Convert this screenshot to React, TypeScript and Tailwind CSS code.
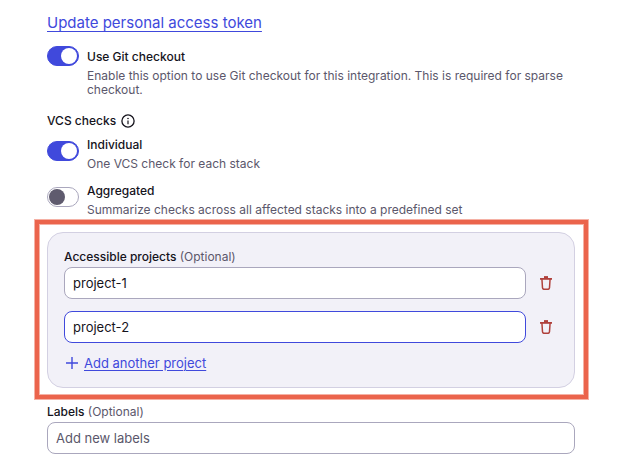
import { useState } from "react";

const initialProjects = ["project-1", "project-2"];

function Toggle({
  id,
  label,
  description,
  defaultChecked,
  align = "top",
}: {
  id: string;
  label: string;
  description: string;
  defaultChecked?: boolean;
  align?: "top" | "offset";
}) {
  return (
    <div className="flex items-start gap-2">
      <span
        className={`relative block h-5 w-8 shrink-0 ${align === "top" ? "" : "mt-1"}`}
      >
        <input
          id={id}
          type="checkbox"
          role="switch"
          defaultChecked={defaultChecked}
          className="peer block h-5 w-8 cursor-pointer appearance-none rounded-full border border-[#aaa7bd] bg-white checked:border-[#4049dc] checked:bg-[#4049dc]"
        />
        <span className="pointer-events-none absolute top-0.5 left-0.5 size-4 rounded-full bg-[#5f5b6e] peer-checked:left-3.5 peer-checked:bg-white" />
      </span>
      <div className={`min-w-0 ${align === "top" ? "pt-[3px]" : ""}`}>
        <label htmlFor={id} className="block leading-4 font-medium">
          {label}
        </label>
        <p className="mt-1 leading-[14px] text-[#5b576b]">{description}</p>
      </div>
    </div>
  );
}

function InfoIcon() {
  return (
    <svg viewBox="0 0 14 14" className="size-3.5" fill="none" aria-hidden="true">
      <circle cx="7" cy="7" r="6.1" stroke="currentColor" strokeWidth="1.3" />
      <path d="M7 6.4v3.8" stroke="currentColor" strokeWidth="1.2" />
      <circle cx="7" cy="4.5" r="0.8" fill="currentColor" />
    </svg>
  );
}

function TrashIcon() {
  return (
    <svg viewBox="0 0 12 14" className="h-3.5 w-3" fill="none" stroke="currentColor" aria-hidden="true">
      <path d="M0 2.9h12" strokeWidth="1.8" />
      <path d="M4 1.1h4" strokeWidth="2" />
      <path d="M1.9 2.8l.6 9q.1 1.5 1.6 1.5h3.8q1.5 0 1.6-1.5l.6-9" strokeWidth="1.5" />
    </svg>
  );
}

function PlusIcon() {
  return (
    <svg viewBox="0 0 12 12" className="size-3" fill="none" stroke="currentColor" aria-hidden="true">
      <path d="M6 0v12M0 6h12" strokeWidth="1.4" />
    </svg>
  );
}

export default function App() {
  const [projects, setProjects] = useState(initialProjects);

  return (
    <main className="bg-white pt-[13px] pr-14 pb-4 pl-[47px] font-['Inter',sans-serif] text-xs text-[#15131c]">
      <a
        href="#token"
        className="block w-fit text-[15px] leading-5 text-[#4049dc] underline decoration-1 underline-offset-3"
      >
        Update personal access token
      </a>

      <div className="mt-[13px]">
        <Toggle
          id="git-checkout"
          label="Use Git checkout"
          description="Enable this option to use Git checkout for this integration. This is required for sparse checkout."
          defaultChecked
        />
      </div>

      {/* VCS checks */}
      <fieldset className="mt-4">
        <legend className="flex items-center gap-[5px] leading-4 font-medium">
          VCS checks
          <button type="button" aria-label="About VCS checks">
            <InfoIcon />
          </button>
        </legend>
        <div className="flex flex-col gap-3 pt-2">
          <Toggle
            id="individual"
            label="Individual"
            description="One VCS check for each stack"
            defaultChecked
            align="offset"
          />
          <Toggle
            id="aggregated"
            label="Aggregated"
            description="Summarize checks across all affected stacks into a predefined set"
            align="offset"
          />
        </div>
      </fieldset>

      {/* Accessible projects */}
      <section className="relative mt-[15px] rounded-2xl border border-[#d3d0e2] bg-[#f2f1f8] p-4">
        {/* Highlight frame */}
        <div className="pointer-events-none absolute -top-[13px] -right-3.5 -bottom-3 -left-[13px] border-4 border-[#eb644c] shadow-[0_0_0_1px_#f5b1a5,inset_0_0_0_1px_#f5b1a5]" />
        <label htmlFor="project-0" className="block leading-4 font-medium">
          Accessible projects <span className="font-normal text-[#5b576b]">(Optional)</span>
        </label>
        <ul className="mt-0.5 flex flex-col gap-3">
          {projects.map((project, i) => (
            <li key={i} className="flex items-center gap-3.5">
              <input
                id={`project-${i}`}
                aria-label={`Project ${i + 1}`}
                value={project}
                onChange={(e) =>
                  setProjects(projects.map((p, j) => (j === i ? e.target.value : p)))
                }
                className={`h-8 min-w-0 flex-1 rounded-lg border bg-white px-2 text-[13px] outline-none ${
                  i === projects.length - 1 ? "border-[#4049dc]" : "border-[#aaa7bd]"
                }`}
              />
              <button
                type="button"
                aria-label={`Remove ${project}`}
                onClick={() => setProjects(projects.filter((_, j) => j !== i))}
                className="mr-1.5 text-[#b0413c]"
              >
                <TrashIcon />
              </button>
            </li>
          ))}
        </ul>
        <button
          type="button"
          onClick={() => setProjects([...projects, ""])}
          className="mt-3 flex items-center gap-1.5 pl-0.5 text-[13px] leading-4 text-[#4049dc]"
        >
          <PlusIcon />
          <span className="underline decoration-1 underline-offset-2">Add another project</span>
        </button>
      </section>

      {/* Labels */}
      <div className="mt-4">
        <label htmlFor="labels" className="block leading-4 font-medium">
          Labels <span className="font-normal text-[#5b576b]">(Optional)</span>
        </label>
        <input
          id="labels"
          placeholder="Add new labels"
          className="mt-0.5 block h-8 w-full rounded-lg border border-[#aaa7bd] bg-white px-2 text-[13px] outline-none placeholder:text-[#5b576b]"
        />
      </div>
    </main>
  );
}
